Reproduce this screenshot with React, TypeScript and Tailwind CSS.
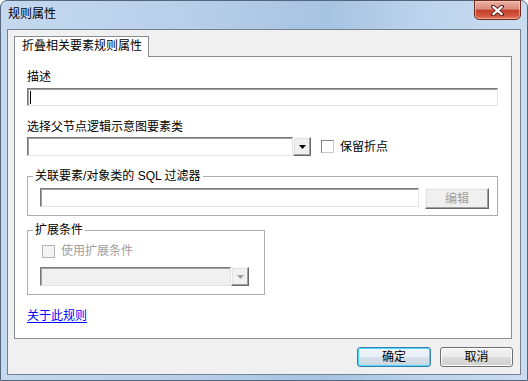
import React from 'react';

const font = "font-['Liberation_Sans','Noto_Sans_CJK_SC',sans-serif]";

// sunken classic edit box
const sunken =
  'border border-t-[#7a7a7a] border-l-[#7a7a7a] border-r-[#e3e3e3] border-b-[#e3e3e3] shadow-[inset_1px_1px_0_#a0a0a0]';

// raised classic button edge
const raised =
  'border border-t-[#f8f8f8] border-l-[#f8f8f8] border-r-[#696969] border-b-[#696969] shadow-[inset_-1px_-1px_0_#a0a0a0,inset_1px_1px_0_#e3e3e3]';

function Arrow({ color }: { color: string }) {
  return (
    <svg width="7" height="4" viewBox="0 0 7 4">
      <path d="M0 0h7L3.5 4z" fill={color} />
    </svg>
  );
}

function Combo({ fieldW, disabled }: { fieldW: string; disabled?: boolean }) {
  return (
    <div className="flex h-[19px] shrink-0">
      <div className={`${fieldW} h-full ${sunken} ${disabled ? 'bg-[#f0f0f0]' : 'bg-white'}`} />
      <div className={`w-[18px] h-full flex items-center justify-center bg-[#f0f0f0] ${raised}`}>
        <Arrow color={disabled ? '#a0a0a0' : '#000'} />
      </div>
    </div>
  );
}

function Check({ disabled }: { disabled?: boolean }) {
  return (
    <span
      className={
        disabled
          ? 'block w-[13px] h-[13px] shrink-0 border border-[#b4b4b4] bg-[#f4f4f4]'
          : 'block w-[13px] h-[13px] shrink-0 border border-t-[#828282] border-l-[#828282] border-r-[#c8c8c8] border-b-[#c8c8c8] bg-white'
      }
    />
  );
}

export default function App() {
  return (
    <div className={`w-[528px] h-[381px] text-[12px] leading-[14px] text-black ${font}`}>
      <div className="flex flex-col h-full rounded-t-[7px] border border-[#56667a] bg-[linear-gradient(to_right,#c4d9ef_0%,#b8cfea_35%,#a6c3e2_62%,#bcd3ec_80%,#cadcf0_100%)]">
        {/* title bar */}
        <div className="h-[28px] shrink-0 flex items-start justify-between">
          <span className="ml-[7px] mt-[6px]">规则属性</span>
          <div className="mr-[6px] -mt-px w-[47px] h-[20px] rounded-b-[5px] border border-[#6e2a20] bg-[linear-gradient(to_bottom,#eab0a2_0%,#dc8b7b_45%,#c63f2c_52%,#d2563f_80%,#e07a5c_100%)] shadow-[inset_0_0_0_1px_rgba(255,220,210,0.5)] flex items-center justify-center">
            <svg width="13" height="11" viewBox="0 0 13 11">
              <path d="M2 1.5L11 9.5M11 1.5L2 9.5" stroke="#5a1c14" strokeWidth="4" strokeLinecap="round" />
              <path d="M2.3 1.8L10.7 9.2M10.7 1.8L2.3 9.2" stroke="#fff" strokeWidth="2.2" strokeLinecap="round" />
            </svg>
          </div>
        </div>

        {/* client area */}
        <div className="mx-[6px] mb-[5px] flex-1 flex flex-col border border-[#75818f] bg-[#f0f0f0] pt-[6px] pl-[6px] pr-[8px]">
          <div className="relative z-10 -mb-px w-[135px] h-[21px] border border-b-0 border-[#898c95] bg-white pl-[7px] pt-[2px]">
            折叠相关要素规则属性
          </div>

          <div className="h-[283px] shrink-0 border border-[#898c95] bg-white pl-[12px] pr-[13px] pt-[13px] flex flex-col">
            <div>描述</div>
            <div className={`mt-[4px] h-[18px] ${sunken} bg-white flex items-center`}>
              <span className="block ml-[2px] w-px h-[13px] bg-black" />
            </div>

            <div className="mt-[14px]">选择父节点逻辑示意图要素类</div>
            <div className="mt-[3px] flex items-center">
              <Combo fieldW="w-[266px]" />
              <span className="ml-[10px]">
                <Check />
              </span>
              <span className="ml-[6px]">保留折点</span>
            </div>

            <fieldset className="mt-[13px] border border-[#adadad]">
              <legend className="ml-[5px] px-[2px] leading-[14px]">关联要素/对象类的 SQL 过滤器</legend>
              <div className="flex items-start gap-[6px] pl-[12px] pr-[7px] pt-[5px] pb-[6px]">
                <div className={`w-[379px] h-[19px] ${sunken} bg-white`} />
                <div className={`w-[64px] h-[21px] flex items-center justify-center bg-[#f0f0f0] text-[#a0a0a0] ${raised}`}>
                  编辑
                </div>
              </div>
            </fieldset>

            <fieldset className="mt-[7px] w-[238px] border border-[#adadad]">
              <legend className="ml-[5px] px-[2px] leading-[14px]">扩展条件</legend>
              <div className="pl-[12px] pt-[7px] pb-[8px]">
                <div className="ml-[2px] flex items-center gap-[6px] h-[14px]">
                  <Check disabled />
                  <span className="text-[#a0a0a0]">使用扩展条件</span>
                </div>
                <div className="mt-[9px]">
                  <Combo fieldW="w-[191px]" disabled />
                </div>
              </div>
            </fieldset>

            <a className="mt-[14px] w-fit text-[#0000ff] underline underline-offset-2">关于此规则</a>
          </div>

          <div className="mt-[8px] -mr-px flex justify-end gap-[9px]">
            <div className="w-[74px] h-[20px] rounded-[3px] border border-[#3c7fb1] shadow-[inset_0_0_0_1px_#48d8fb] bg-[linear-gradient(to_bottom,#f0f5f9_0%,#e6eef5_50%,#d6e1ea_50%,#c9d6e1_100%)] flex items-center justify-center">
              确定
            </div>
            <div className="w-[73px] h-[20px] rounded-[3px] border border-[#707070] shadow-[inset_0_0_0_1px_#fcfcfc] bg-[linear-gradient(to_bottom,#f2f2f2_0%,#ebebeb_50%,#dddddd_50%,#cfcfcf_100%)] flex items-center justify-center">
              取消
            </div>
          </div>
        </div>
      </div>
    </div>
  );
}
